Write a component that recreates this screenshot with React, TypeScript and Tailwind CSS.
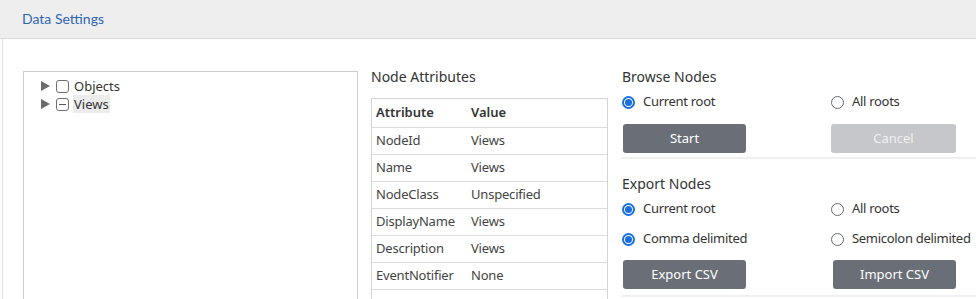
import React from "react";

type Attr = { name: string; value: string };

const attrs: Attr[] = [
  { name: "NodeId", value: "Views" },
  { name: "Name", value: "Views" },
  { name: "NodeClass", value: "Unspecified" },
  { name: "DisplayName", value: "Views" },
  { name: "Description", value: "Views" },
  { name: "EventNotifier", value: "None" },
  { name: "", value: "" },
];

function Radio({ checked, label }: { checked?: boolean; label: string }) {
  return (
    <div className="flex items-center h-[20px] whitespace-nowrap">
      {checked ? (
        <span className="w-[13px] h-[13px] rounded-full border-[2px] border-[#1a6fe0] flex items-center justify-center">
          <span className="w-[7px] h-[7px] rounded-full bg-[#1a6fe0]" />
        </span>
      ) : (
        <span className="w-[13px] h-[13px] rounded-full border border-[#666a70]" />
      )}
      <span className="ml-[8px] text-[13px] tracking-[-0.3px] text-[#333]">{label}</span>
    </div>
  );
}

function Btn({ label, disabled }: { label: string; disabled?: boolean }) {
  return (
    <button
      className={
        disabled
          ? "w-[125px] h-[29px] rounded-[3px] bg-[#c5c7ca] text-[#eef0f2] text-[13px]"
          : "w-[123px] h-[29px] rounded-[3px] bg-[#6a6f77] text-white text-[13px]"
      }
    >
      {label}
    </button>
  );
}

function TreeRow({ label, minus, selected }: { label: string; minus?: boolean; selected?: boolean }) {
  return (
    <div className="flex items-center h-[18px]">
      <svg width="9" height="10" viewBox="0 0 9 10" className="mr-[6px]">
        <path d="M0 0 L9 5 L0 10 Z" fill="#6b6b6b" />
      </svg>
      <span className="w-[13px] h-[13px] rounded-[3px] border border-[#6f6f6f] flex items-center justify-center">
        {minus && <span className="w-[7px] h-[1px] bg-[#555]" />}
      </span>
      <span className={"ml-[4px] px-[1px] text-[13px] text-[#333] leading-[18px] " + (selected ? "bg-[#ececec]" : "")}>
        {label}
      </span>
    </div>
  );
}

export default function App() {
  return (
    <div className="w-[976px] h-[299px] overflow-hidden bg-white" style={{ fontFamily: '"Noto Sans", "Open Sans", sans-serif' }}>
      <div className="h-[39px] bg-[#eeeeee] border-b border-[#dadada] pl-[22px] flex items-center">
        <span className="text-[14px] text-[#2f66b3] font-['Lato',sans-serif] -mt-[1px]">Data Settings</span>
      </div>
      <div className="ml-[2px] border-l border-[#e2e2e2] h-[260px] flex pl-[20px]">
        <div className="w-[335px] mt-[32px] border border-[#cfcfcf] h-[300px] pl-[17px] pt-[5px]">
          <TreeRow label="Objects" />
          <TreeRow label="Views" minus selected />
        </div>
        <div className="w-[237px] ml-[13px] pt-[28px]">
          <div className="text-[14px] text-[#333] h-[20px] leading-[20px]">Node Attributes</div>
          <div className="mt-[11px] border border-[#d4d4d4]">
            <div className="flex h-[29px] items-center border-b border-[#dcdcdc] text-[13px] font-semibold text-[#333]">
              <span className="w-[99px] pl-[4px]">Attribute</span>
              <span>Value</span>
            </div>
            {attrs.map((a, i) => (
              <div key={i} className="flex h-[27px] items-center border-b border-[#dcdcdc] text-[13px] text-[#444] tracking-[-0.2px]">
                <span className="w-[99px] pl-[4px]">{a.name}</span>
                <span>{a.value}</span>
              </div>
            ))}
          </div>
        </div>
        <div className="flex-1 ml-[14px] pt-[28px]">
          <div className="text-[14px] text-[#333] h-[20px] leading-[20px]">Browse Nodes</div>
          <div className="grid grid-cols-[209px_1fr] mt-[5px]">
            <Radio checked label="Current root" />
            <Radio label="All roots" />
          </div>
          <div className="grid grid-cols-[209px_1fr] mt-[12px]">
            <div className="pl-[1px]"><Btn label="Start" /></div>
            <Btn label="Cancel" disabled />
          </div>
          <div className="mt-[4px] h-[2px] bg-[#f0f0f0]" />
          <div className="text-[14px] text-[#333] h-[20px] leading-[20px] mt-[15px]">Export Nodes</div>
          <div className="grid grid-cols-[209px_1fr] gap-y-[10px] mt-[5px]">
            <Radio checked label="Current root" />
            <Radio label="All roots" />
            <Radio checked label="Comma delimited" />
            <Radio label="Semicolon delimited" />
          </div>
          <div className="grid grid-cols-[211px_1fr] mt-[11px]">
            <div className="pl-[1px]"><Btn label="Export CSV" /></div>
            <Btn label="Import CSV" />
          </div>
          <div className="mt-[6px] h-[2px] bg-[#f0f0f0]" />
        </div>
      </div>
    </div>
  );
}
